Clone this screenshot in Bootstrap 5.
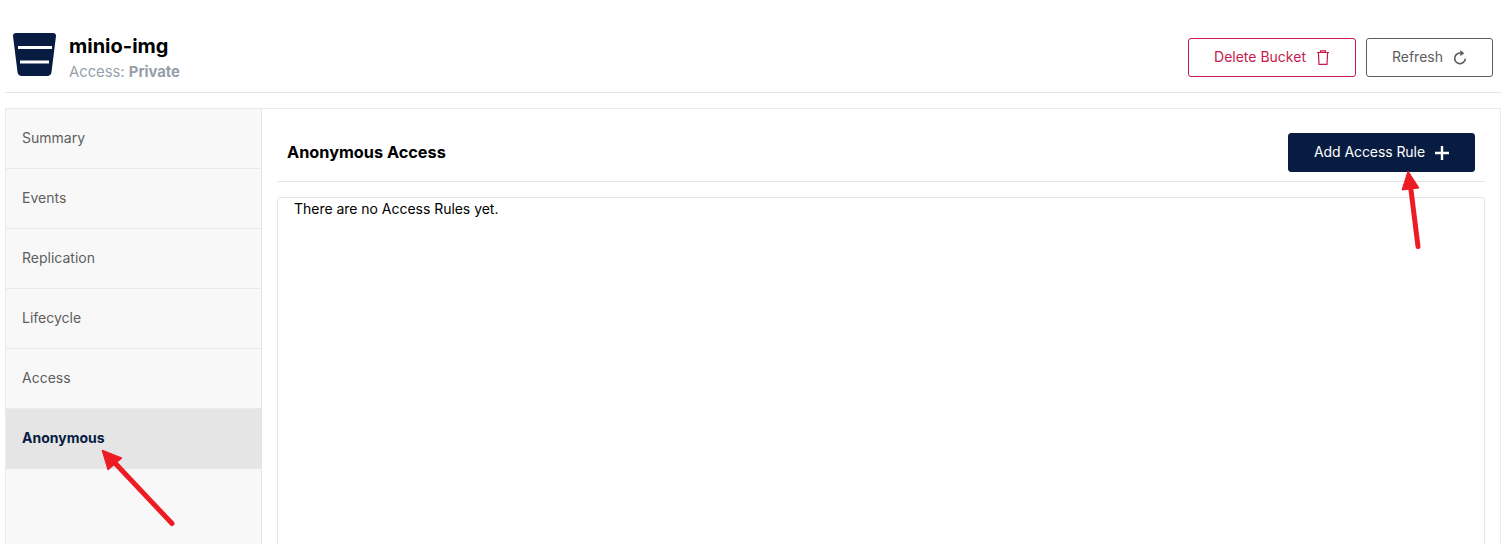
<!DOCTYPE html>
<html lang="en">
<head>
<meta charset="utf-8">
<title>minio-img</title>
<link href="https://cdn.jsdelivr.net/npm/bootstrap@5.3.0/dist/css/bootstrap.min.css" rel="stylesheet">
<style>
html,body{height:544px;overflow:hidden;background:#fff;}
body{font-family:Inter,"Liberation Sans",sans-serif;font-size:14px;color:#000;position:relative;}
.page-head{height:93px;margin:0 4px 0 5px;border-bottom:1px solid #e5e5e5;padding:33px 8px 0 8px;}
.bucket-ico{width:43px;height:43px;flex:none;}
.bucket-name{font-size:20px;font-weight:700;line-height:26px;margin:0;color:#000;}
.bucket-access{font-size:14.8px;line-height:24px;margin-top:1px;color:#969fa9;}
.bucket-access b{font-weight:700;}
.head-text{margin-left:13px;}
.act-btn{height:39px;padding:0 25px;border-radius:3px;font-size:14px;line-height:1;display:inline-flex;align-items:center;gap:10px;}
.act-btn svg{flex:none;}
.act-btn span{padding-bottom:2px;}
.btn-del{color:#c51b4b;border:1px solid #c51b4b;background:#fff;}
.btn-ref{color:#5e5e5e;border:1px solid #5e5e5e;background:#fff;}
.btn-add{color:#fff;background:#081c42;border:1px solid #081c42;}
.btn-add span{letter-spacing:-.07px;}
.head-actions{margin-top:5px;gap:10px;}
.panel-wrap{margin:15px 4px 0 5px;border:1px solid #eaeaea;height:440px;}
.side-menu{width:256px;flex:none;background:#f8f8f8;border-right:1px solid #e5e5e5;}
.side-item{display:block;height:60px;line-height:57px;padding-left:16px;border-bottom:1px solid #eaeaea;color:#5e5e5e;font-size:14px;text-decoration:none;}
.side-item.is-on{background:#e5e5e5;color:#081c42;font-weight:700;border-bottom:0;}
.main-pane{padding:24px 15px 0 15px;min-width:0;}
.pane-head{height:49px;border-bottom:1px solid #e5e5e5;padding:0 10px;}
.pane-title{font-size:16.3px;font-weight:700;color:#000;margin:0;line-height:39px;}
.rules-box{margin-top:15px;height:400px;border:1px solid #e5e5e5;border-radius:3px;padding:0 16px;line-height:22px;color:#000;letter-spacing:-.03px;}
.arrows{position:absolute;left:0;top:0;pointer-events:none;}
</style>
</head>
<body>
<header class="page-head d-flex justify-content-between align-items-start">
  <div class="d-flex">
    <svg class="bucket-ico" viewBox="0 0 43 43" aria-hidden="true">
      <path d="M3 0H40Q43 0 43 3L38.500 39Q38 43 34 43H9Q5 43 4.500 39L0 3Q0 0 3 0Z" fill="#081c42"/>
      <rect x="5" y="13" width="34" height="3" fill="#fff"/>
      <rect x="7" y="27.500" width="29" height="3" fill="#fff"/>
    </svg>
    <div class="head-text">
      <h1 class="bucket-name">minio-img</h1>
      <div class="bucket-access">Access: <b>Private</b></div>
    </div>
  </div>
  <div class="head-actions d-flex">
    <button type="button" class="btn act-btn btn-del"><span>Delete Bucket</span>
      <svg width="14" height="15" viewBox="0 0 14 15" fill="none" stroke="#c51b4b" stroke-width="1.200" aria-hidden="true"><path d="M1 2.500H13M2.400 2.500 3 14.300H11L11.600 2.500M4.500 2.300V.8H9.500V2.300"/></svg>
    </button>
    <button type="button" class="btn act-btn btn-ref"><span>Refresh</span>
      <svg width="14" height="15" viewBox="0 0 14 15" fill="none" aria-hidden="true"><path d="M8.800 3.400A5.300 5.300 0 1 0 12.300 8.600" stroke="#5e5e5e" stroke-width="1.600"/><path d="M7.300 0 11.300 3.200 7.300 6.200Z" fill="#5e5e5e"/></svg>
    </button>
  </div>
</header>
<div class="panel-wrap d-flex">
  <nav class="side-menu">
    <a class="side-item" href="#">Summary</a>
    <a class="side-item" href="#">Events</a>
    <a class="side-item" href="#">Replication</a>
    <a class="side-item" href="#">Lifecycle</a>
    <a class="side-item" href="#">Access</a>
    <a class="side-item is-on" href="#">Anonymous</a>
  </nav>
  <main class="main-pane flex-grow-1">
    <div class="pane-head d-flex justify-content-between align-items-start">
      <h2 class="pane-title">Anonymous Access</h2>
      <button type="button" class="btn act-btn btn-add"><span>Add Access Rule</span>
        <svg width="14" height="14" viewBox="0 0 14 14" aria-hidden="true"><path d="M7 0V14M0 7H14" stroke="#fff" stroke-width="2.400"/></svg>
      </button>
    </div>
    <div class="rules-box">There are no Access Rules yet.</div>
  </main>
</div>
<svg class="arrows" width="1505" height="544" viewBox="0 0 1505 544" aria-hidden="true">
  <path d="M1418 246.500 1410.500 186" stroke="#ed1c24" stroke-width="5" stroke-linecap="round" fill="none"/>
  <path d="M1408 171 1402 190 1419 188Z" fill="#ed1c24" stroke="#ed1c24" stroke-linejoin="round"/>
  <path d="M172 523.500 114 462" stroke="#ed1c24" stroke-width="5" stroke-linecap="round" fill="none"/>
  <path d="M102 450 108 470 122 458Z" fill="#ed1c24" stroke="#ed1c24" stroke-linejoin="round"/>
</svg>
</body>
</html>
